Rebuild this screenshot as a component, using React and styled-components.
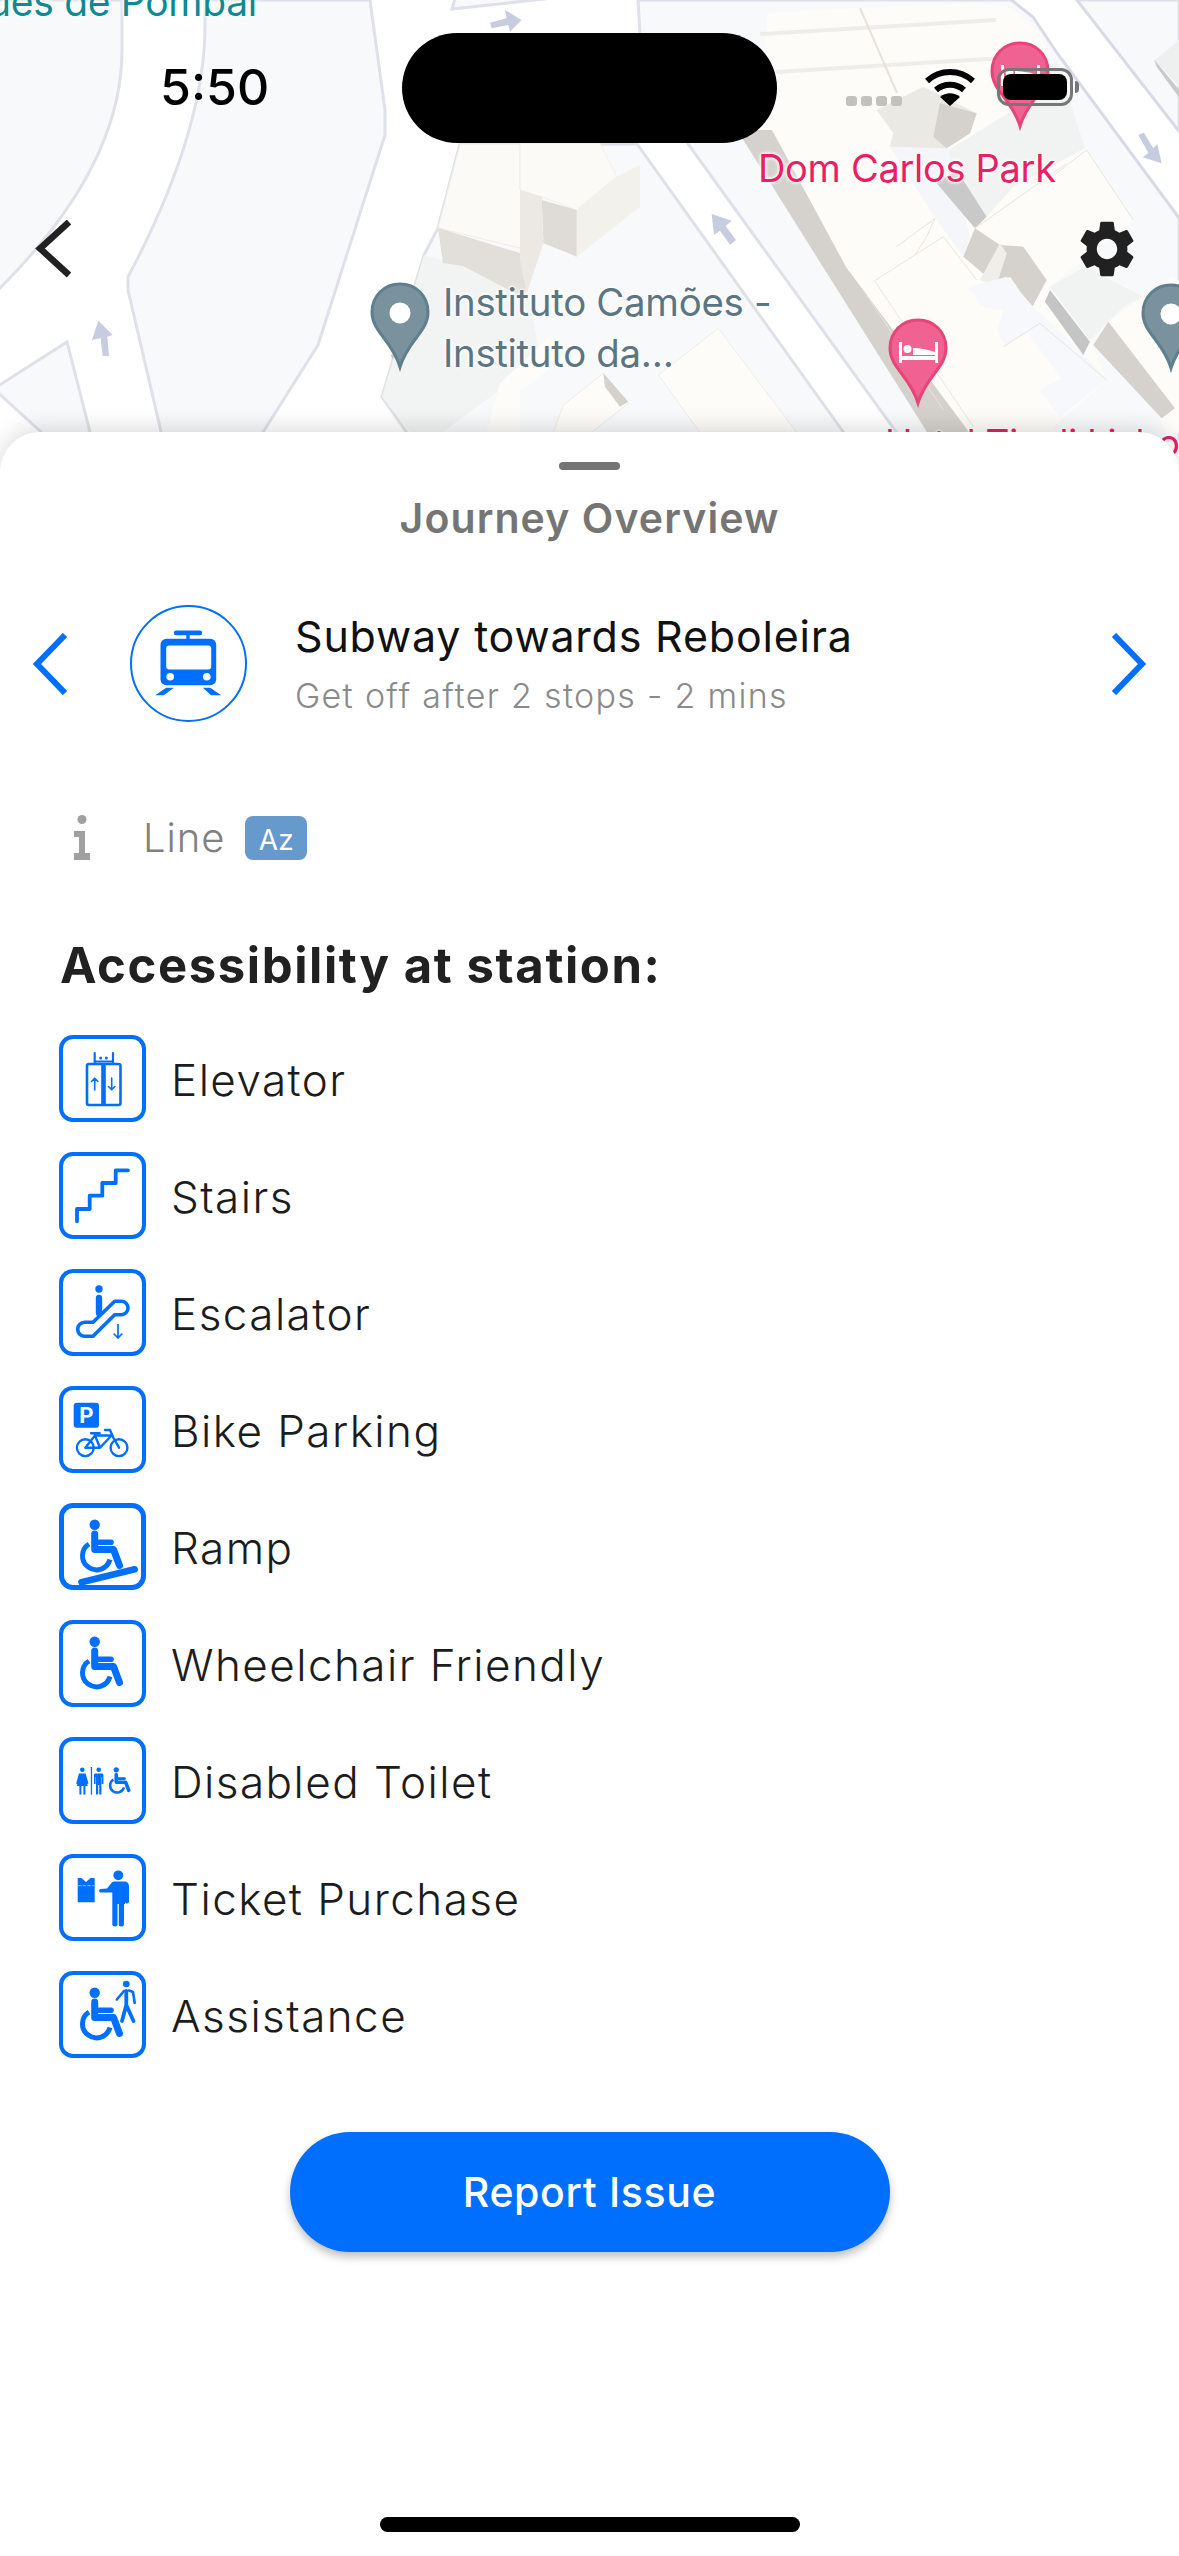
import React from 'react'
import styled, { createGlobalStyle } from 'styled-components'
import { MdSettings } from 'react-icons/md'

const BLUE = '#006ffd'

const GlobalStyle = createGlobalStyle`
  html, body {
    margin: 0;
    padding: 0;
    background: #fff;
  }
  * {
    box-sizing: border-box;
  }
`

const Page = styled.div`
  position: relative;
  width: 1179px;
  height: 2556px;
  overflow: hidden;
  display: flex;
  flex-direction: column;
  background: #fff;
  font-family: Inter, 'Liberation Sans', sans-serif;
`

const MapArea = styled.div`
  position: relative;
  flex-shrink: 0;
  height: 480px;
  overflow: hidden;
  background: #fff;
  svg {
    display: block;
  }
`

const MapLabel = styled.div`
  position: absolute;
  left: ${(p) => p.$x}px;
  top: ${(p) => p.$y}px;
  font-size: ${(p) => p.$size || 38.4}px;
  line-height: 51px;
  letter-spacing: -0.3px;
  white-space: pre;
  color: ${(p) => p.$color};
  text-shadow: 0 0 3px #fff, 0 0 3px #fff, 0 0 5px #fff;
`

const StatusBar = styled.div`
  position: absolute;
  top: 33px;
  left: 0;
  width: 100%;
  display: flex;
  align-items: flex-start;
  padding-left: 160px;
`

const Time = styled.div`
  width: 242px;
  margin-top: 24px;
  font-size: 50px;
  line-height: 60px;
  font-weight: 500;
  color: #000;
`

const Island = styled.div`
  width: 375px;
  height: 110px;
  border-radius: 55px;
  background: #000;
`

const SignalDots = styled.div`
  display: flex;
  gap: 4px;
  margin: 63px 0 0 69px;
`

const SignalDot = styled.span`
  width: 11px;
  height: 10px;
  border-radius: 3px;
  background: #c2c1bd;
`

const WifiIcon = styled.svg`
  margin: 35px 0 0 23px;
`

const Battery = styled.div`
  position: relative;
  width: 76px;
  height: 38px;
  margin: 35px 0 0 22px;
  padding: 3px;
  border: 3px solid #777;
  border-radius: 12px;
  &::after {
    content: '';
    position: absolute;
    right: -9px;
    top: 10px;
    width: 4px;
    height: 12px;
    border-radius: 0 4px 4px 0;
    background: #777;
  }
`

const BatteryFill = styled.div`
  width: 100%;
  height: 100%;
  border-radius: 8px;
  background: #000;
`

const TopControls = styled.div`
  position: absolute;
  top: 220px;
  left: 34px;
  right: 44px;
  display: flex;
  justify-content: space-between;
  align-items: center;
  color: #212121;
`

const Sheet = styled.div`
  position: relative;
  flex: 1;
  margin-top: -48px;
  display: flex;
  flex-direction: column;
  background: #fff;
  border-radius: 40px 40px 0 0;
  box-shadow: 0 -4px 22px rgba(0, 0, 0, 0.14);
`

const Grabber = styled.div`
  align-self: center;
  width: 61px;
  height: 8px;
  margin-top: 30px;
  border-radius: 4px;
  background: #757575;
`

const Title = styled.h2`
  margin: 24px 0 0;
  text-align: center;
  font-size: 41px;
  line-height: 48px;
  font-weight: 600;
  letter-spacing: 1.1px;
  color: #757575;
`

const StepRow = styled.div`
  display: flex;
  align-items: center;
  margin-top: 63px;
  padding: 0 32px;
`

const StepArrow = styled.svg`
  flex-shrink: 0;
`

const StepCircle = styled.div`
  flex-shrink: 0;
  width: 117px;
  height: 117px;
  margin: 0 48px 0 62px;
  border: 2.5px solid ${BLUE};
  border-radius: 50%;
`

const StepText = styled.div`
  flex: 1;
  display: flex;
  flex-direction: column;
  gap: 11px;
`

const StepTitle = styled.div`
  font-size: 43px;
  line-height: 54px;
  letter-spacing: 0.8px;
  color: #111;
`

const StepMeta = styled.div`
  font-size: 34px;
  line-height: 44px;
  letter-spacing: 1.3px;
  font-weight: 300;
  color: #8a8a8a;
`

const LineInfo = styled.div`
  display: flex;
  align-items: center;
  margin-top: 92px;
  padding-left: 73px;
`

const LineText = styled.span`
  margin-left: 52px;
  font-size: 40px;
  line-height: 48px;
  font-weight: 300;
  letter-spacing: 0.9px;
  color: #808080;
`

const LineBadge = styled.span`
  display: flex;
  align-items: center;
  justify-content: center;
  width: 62px;
  height: 44px;
  margin-left: 20px;
  border-radius: 8px;
  background: #6699cc;
  font-size: 28px;
  padding-top: 4px;
  color: #fff;
`

const SectionHeading = styled.h3`
  margin: 74px 0 0 60px;
  font-size: 49px;
  line-height: 60px;
  font-weight: 700;
  letter-spacing: 1.6px;
  color: #212121;
`

const FeatureList = styled.div`
  display: flex;
  flex-direction: column;
  gap: 30px;
  margin-top: 39px;
  padding-left: 59px;
`

const FeatureRow = styled.div`
  display: flex;
  align-items: center;
  gap: 25px;
`

const FeatureIcon = styled.div`
  flex-shrink: 0;
  width: 87px;
  height: 87px;
  border-radius: 14px;
  box-shadow: inset 0 0 0 ${(p) => p.$border || 4}px ${BLUE};
  svg {
    display: block;
  }
`

const FeatureName = styled.span`
  padding-top: 2px;
  font-size: 44px;
  line-height: 56px;
  font-weight: 300;
  letter-spacing: 1.45px;
  color: #1c1c1c;
`

const ReportButton = styled.button`
  align-self: center;
  width: 600px;
  height: 120px;
  margin-top: 74px;
  border: none;
  border-radius: 60px;
  background: ${BLUE};
  box-shadow: 0 5px 9px rgba(0, 0, 0, 0.25);
  font-family: inherit;
  font-size: 41px;
  font-weight: 500;
  letter-spacing: 0.65px;
  color: #fff;
`

const HomeBar = styled.div`
  align-self: center;
  width: 420px;
  height: 15px;
  margin-top: auto;
  margin-bottom: 24px;
  border-radius: 8px;
  background: #000;
`

const PIN = 'M30 2C14 2 2 14 2 30C2 50 22 58 30 85C38 58 58 50 58 30C58 14 46 2 30 2Z'

const SlatePin = ({ x, y }) => (
  <g transform={`translate(${x} ${y})`}>
    <path d={PIN} fill="#7a929e" stroke="#5f7f8f" strokeWidth="3" />
    <circle cx="30" cy="31" r="10.5" fill="#fff" />
  </g>
)

const BedPin = ({ x, y }) => (
  <g transform={`translate(${x} ${y})`}>
    <path d={PIN} fill="#f06292" stroke="#e8447a" strokeWidth="3" />
    <g fill="#fff">
      <rect x="11" y="24" width="3" height="21" />
      <rect x="47" y="24" width="3" height="21" />
      <rect x="11" y="38" width="39" height="4" />
      <circle cx="19.5" cy="31" r="4" />
      <path d="M25 37V30C33 30 40 32 47 34V37Z" />
    </g>
  </g>
)

const MapDrawing = () => (
  <svg width="1179" height="480" viewBox="0 0 1179 480">
    <rect width="1179" height="480" fill="#fff" />
    <g fill="#f8f9fb" stroke="#dfe1e8" strokeWidth="3">
      <path d="M-5 0H122V50C122 120 90 200 -5 293Z" />
      <path d="M205 0V25C205 80 190 160 128 277V290L163 440H258L318 345L385 135V110L370 0Z" />
      <path d="M-5 388L67 342L92 440H50L-5 390Z" />
      <path d="M460 144L438 228L424 255L382 397L412 440H849L637 144Z" />
      <path d="M638 0L640 33L688 144L902 440H1179V0Z" />
      <path d="M456 -5L452 9L580 -5Z" />
    </g>
    <path d="M1005 -5H1073L1185 139V226L1057 53L1033 17Z" fill="#fff" stroke="#d8dbe5" strokeWidth="3" />
    <path d="M395 353L435 440" stroke="#cdcdcd" strokeWidth="10" fill="none" />
    <path d="M424 255L382 397L410 432H443L540 360L530 300L463 266Z" fill="#f2f4f3" />

    {/* left building */}
    <path d="M460 144H520V190L542 197L528 250L438 228Z" fill="#fbfaf6" stroke="#eeece6" />
    <path d="M438 228L520 253L528 300L463 266L443 263Z" fill="#e2dfdb" />
    <g transform="translate(520 0) scale(0.3333)">
      <path d="M0 430H240L290 530L170 630L65 590L0 570Z" fill="#fbfaf6" stroke="#eeece6" strokeWidth="2" />
      <path d="M290 530L360 495V620L170 770V630Z" fill="#f3f1ec" />
      <path d="M65 600L170 630V770L70 730Z" fill="#dfdcd8" />
      <path d="M65 590L70 730L20 880L0 780V570Z" fill="#ece9e5" />
      {/* lower buildings */}
      <path d="M415 1125L595 985L830 1297H540Z" fill="#fdfcf8" stroke="#e9e6de" strokeWidth="2" />
      <path d="M100 1297L130 1215L250 1120L325 1210L215 1297Z" fill="#fdfcf8" stroke="#e9e6de" strokeWidth="2" />
      <path d="M250 1120L325 1205L300 1220L255 1160Z" fill="#d5d2cd" />
      <path d="M-100 1297L-60 1150L100 1000L100 1100L0 1170V1297Z" fill="#fdfcf8" />
    </g>

    {/* big block on the right */}
    <path d="M768 13L860 8L980 3L1010 8L1040 33L1085 148L1133 220L1050 287L1090 340L1107 380L1053 427L1060 440H969L843 267L754 144Z" fill="#fdfcf8" />
    <path d="M737 130L772 130L846 267L975 440H932L823 267Z" fill="#d5d2cd" />
    <g fill="none" stroke="#efede7" strokeWidth="4">
      <path d="M760 34L996 20" />
      <path d="M776 72L1003 58" />
    </g>
    <path d="M860 8L897 93" stroke="#e6e3da" strokeWidth="2" fill="none" />

    <g transform="translate(800 20) scale(0.3333)">
      <path d="M430 400L640 270L770 120L855 385L640 500L560 590Z" fill="#f0f3f2" />
      <path d="M270 380L440 370L510 650L490 710L410 600Z" fill="#f4f6fa" />
      <path d="M230 270L370 200L530 280L510 340L440 385L270 380L280 340Z" fill="#ebe9e4" />
      <path d="M420 250L530 280L510 340L440 385L400 350Z" fill="#d5d2cd" />
      <path d="M410 490L470 450L560 590L525 625Z" fill="#c9c9c9" />
      <path d="M525 625L600 675L670 680L740 780L695 865L630 770L590 795L490 710Z" fill="#d5d2cd" />
      <path d="M540 780L600 670L620 700L590 795Z" fill="#f0eee9" />
      <path d="M505 800L620 770L700 860L850 1000L920 1080L780 1190L720 1110L785 1075L680 935L620 980L590 930L610 870L545 860Z" fill="#f6f8fb" />
      <path d="M735 845L750 810L870 965L850 1005Z" fill="#c5c5c5" />
      <path d="M750 800L855 740L1030 830L970 860L925 905L870 960Z" fill="#f0f3f2" />
      <path d="M925 905L1115 770L1150 790V1240H1100Z" fill="#fdfcf8" />
      <path d="M880 975L925 905L1125 1165L1085 1195Z" fill="#d5d2cd" />
      <path d="M1065 120L1150 50V160L1150 215Z" fill="#eef0ef" />
      <path d="M1062 118L1150 225V250L1070 140Z" fill="#c9c9c9" />
      <g fill="none" stroke="#e8e5dc" strokeWidth="3">
        <path d="M525 625L800 430" />
        <path d="M290 680L405 595L380 650L345 705" />
        <path d="M220 785L430 650L530 780" />
        <path d="M190 810L430 1170" />
        <path d="M225 785L520 1220" />
        <path d="M610 980L720 910L920 1080" />
        <path d="M730 490L860 390L1000 600" />
      </g>
    </g>

    {/* one-way arrows */}
    <g fill="#c8cce0">
      <path transform="scale(0.3333)" d="M295 962L338 1005L322 1010L327 1068L308 1068L302 1015L276 1020Z" />
      <path transform="scale(0.3333)" d="M1470 68L1520 55L1515 30L1565 60L1530 95L1525 75L1475 85Z" />
      <path transform="translate(520 0) scale(0.3333)" d="M575 642L635 662L617 678L648 720L630 735L600 692L582 705Z" />
      <path transform="translate(800 20) scale(0.3333)" d="M1015 345L1032 338L1060 385L1072 372L1085 430L1028 412L1045 398Z" />
    </g>

    <SlatePin x={370} y={282} />
    <SlatePin x={1141} y={283} />
    <BedPin x={888} y={318} />
    <BedPin x={990} y={41} />
  </svg>
)

const Wheelchair = () => (
  <g>
    <circle cx="35.7" cy="21.8" r="5.2" fill={BLUE} stroke="none" />
    <g fill="none" stroke={BLUE} strokeLinecap="round" strokeLinejoin="round">
      <path d="M35.7 31V46.5H54.5L60.5 62.5" strokeWidth="7" />
      <path d="M35.7 39.3H52" strokeWidth="5.6" />
      <path d="M30 41A14 14 0 1 0 51 56.5" strokeWidth="5" strokeLinecap="butt" />
    </g>
  </g>
)

const IconSvg = ({ children }) => (
  <svg width="87" height="87" viewBox="0 0 87 87">
    {children}
  </svg>
)

const ElevatorIcon = () => (
  <IconSvg>
    <g fill="none" stroke={BLUE} strokeWidth="2.6" strokeLinecap="round" strokeLinejoin="round">
      <rect x="28" y="29" width="33.5" height="41" rx="2" />
      <path d="M35.7 18V28M54 18V28M35.7 26.5H54" strokeWidth="2.2" />
      <path d="M35.7 55V43.5M32.5 46.5L35.7 43.2L38.9 46.5" strokeWidth="1.6" />
      <path d="M52.7 43V54.5M49.5 51.5L52.7 54.8L55.9 51.5" strokeWidth="1.6" />
    </g>
    <rect x="42.2" y="29" width="4.6" height="41" fill={BLUE} />
    <circle cx="41.7" cy="23" r="1.5" fill={BLUE} />
    <circle cx="47.3" cy="23" r="1.5" fill={BLUE} />
  </IconSvg>
)

const StairsIcon = () => (
  <IconSvg>
    <path
      d="M18 69.3V57H30.7V43.7H43.3V31H56.7V18.3H69"
      fill="none"
      stroke={BLUE}
      strokeWidth="3.8"
      strokeLinecap="round"
      strokeLinejoin="round"
    />
  </IconSvg>
)

const EscalatorIcon = () => (
  <IconSvg>
    <circle cx="40" cy="20" r="3.7" fill={BLUE} />
    <path d="M40 29V44" stroke={BLUE} strokeWidth="6.4" strokeLinecap="round" />
    <path
      d="M25.7 53.3H34L55.7 32.3H62.3A6.7 6.7 0 0 1 62.3 45.7H55.7L34 67.3H25.7A7 7 0 0 1 25.7 53.3Z"
      fill="#fff"
      stroke={BLUE}
      strokeWidth="3.6"
      strokeLinejoin="round"
    />
    <path d="M59 55V68.5M54.7 64.5L59 69L63.3 64.5" fill="none" stroke={BLUE} strokeWidth="1.7" />
  </IconSvg>
)

const BikeIcon = () => (
  <IconSvg>
    <rect x="14.7" y="16.7" width="25.3" height="25" rx="3" fill={BLUE} />
    <text x="27.3" y="36.5" textAnchor="middle" fontFamily="Roboto, sans-serif" fontWeight="700" fontSize="22" fill="#fff">
      P
    </text>
    <g fill="none" stroke={BLUE} strokeWidth="2.4" strokeLinecap="round" strokeLinejoin="round">
      <circle cx="26.3" cy="61.7" r="8.4" />
      <circle cx="60" cy="61.7" r="8.4" />
      <path d="M26.3 61.7L36 49.5H52.5L41 61.7H26.3M36 47.5V49.5L41 61.7" />
      <path d="M32 47.3H40.7M46 44H51L54.5 52L60 61.7" />
    </g>
  </IconSvg>
)

const RampIcon = () => (
  <IconSvg>
    <Wheelchair />
    <path d="M22.5 79.3L75.7 66.3" stroke={BLUE} strokeWidth="6.6" strokeLinecap="round" />
  </IconSvg>
)

const ChairIcon = () => (
  <IconSvg>
    <Wheelchair />
  </IconSvg>
)

const ToiletIcon = () => (
  <IconSvg>
    <circle cx="23.3" cy="32.8" r="2.3" fill={BLUE} />
    <path
      d="M20 36.5H26.6L29.5 46.5L28.2 47L26.5 41.5L28.8 49H26.4V57.5H24.4V49H22.4V57.5H20.4V49H17.8L20 41.5L18.4 47L17.1 46.5Z"
      fill={BLUE}
    />
    <rect x="31.8" y="30" width="1.3" height="27.7" fill={BLUE} />
    <circle cx="39.7" cy="32.8" r="2.3" fill={BLUE} />
    <path
      d="M36 36.5H43.2A1.2 1.2 0 0 1 44.4 37.7V47H42.8V40H42.4V57.5H40.2V48H39.2V57.5H37V40H36.6V47H35V37.7A1.2 1.2 0 0 1 36 36.5Z"
      fill={BLUE}
    />
    <g transform="translate(39.3 21.9) scale(0.503)">
      <Wheelchair />
    </g>
  </IconSvg>
)

const TicketIcon = () => (
  <IconSvg>
    <path d="M18.7 48.3V24H22.5L27 28L31.5 24H35.7V48.3Z" fill={BLUE} />
    <path d="M19 31.7H35.5" stroke="#8dbcfd" strokeWidth="1" strokeDasharray="3.5 1.2" />
    <circle cx="59.3" cy="21.3" r="4.9" fill={BLUE} />
    <path d="M55 27.5H65.5A4.5 4.5 0 0 1 70 32V47.5A2 2 0 0 1 66 47.5V50H65V71A2.9 2.9 0 0 1 59.8 71V50H58.5V71A2.9 2.9 0 0 1 53.3 71V38.5L50 38.5H41.5A1.8 1.8 0 0 1 41.5 35L48 34.5L52 29.5A4 4 0 0 1 55 27.5Z" fill={BLUE} />
  </IconSvg>
)

const AssistanceIcon = () => (
  <IconSvg>
    <Wheelchair />
    <circle cx="67.3" cy="13" r="3.3" fill={BLUE} />
    <g fill="none" stroke={BLUE} strokeLinecap="round" strokeLinejoin="round">
      <path d="M67.3 20V34L63 50M67.3 34L74.5 50" strokeWidth="3.8" />
      <path d="M65 20L57.8 28.5M70 19.5L74 21L75.7 32" strokeWidth="2.6" />
    </g>
  </IconSvg>
)

const features = [
  { name: 'Elevator', Icon: ElevatorIcon },
  { name: 'Stairs', Icon: StairsIcon },
  { name: 'Escalator', Icon: EscalatorIcon },
  { name: 'Bike Parking', Icon: BikeIcon },
  { name: 'Ramp', Icon: RampIcon, border: 5 },
  { name: 'Wheelchair Friendly', Icon: ChairIcon },
  { name: 'Disabled Toilet', Icon: ToiletIcon },
  { name: 'Ticket Purchase', Icon: TicketIcon },
  { name: 'Assistance', Icon: AssistanceIcon },
]

const App = () => (
  <Page>
    <GlobalStyle />
    <MapArea>
      <MapDrawing />
      <MapLabel $x={-12} $y={-24} $size={39} $color="#0e8a93">
        ues de Pombal
      </MapLabel>
      <MapLabel $x={758} $y={143} $size={38} $color="#e91e63">
        Dom Carlos Park
      </MapLabel>
      <MapLabel $x={443} $y={277} $color="#5b7583">
        {'Instituto Camões -\nInstituto da…'}
      </MapLabel>
      <MapLabel $x={885} $y={417} $size={37} $color="#e91e63">
        Hotel Tivoli Lisboa
      </MapLabel>
      <StatusBar>
        <Time>5:50</Time>
        <Island />
        <SignalDots>
          <SignalDot />
          <SignalDot />
          <SignalDot />
          <SignalDot />
        </SignalDots>
        <WifiIcon width="50" height="38" viewBox="0 0 50 38">
          <g fill="none" stroke="#000" strokeWidth="6">
            <path d="M2 13C15 1 35 1 48 13" />
            <path d="M11 22C19 15 31 15 39 22" />
          </g>
          <path d="M25 38L15 29C21 24 29 24 35 29Z" fill="#000" />
        </WifiIcon>
        <Battery>
          <BatteryFill />
        </Battery>
      </StatusBar>
      <TopControls>
        <svg width="40" height="58" viewBox="0 0 40 58">
          <path d="M35 2L6 28.5L35 55" fill="none" stroke="#212121" strokeWidth="6.5" />
        </svg>
        <MdSettings size={68} style={{ margin: '-5px -6px' }} />
      </TopControls>
    </MapArea>
    <Sheet>
      <Grabber />
      <Title>Journey Overview</Title>
      <StepRow>
        <StepArrow width="36" height="62" viewBox="0 0 36 62">
          <path d="M33 2L5 31L33 60" fill="none" stroke={BLUE} strokeWidth="6" />
        </StepArrow>
        <StepCircle>
          <svg width="112" height="112" viewBox="2.5 2.5 112 112">
            <rect x="44.3" y="26" width="28.4" height="4.8" rx="2.4" fill={BLUE} />
            <rect x="56.8" y="30" width="3.4" height="5" fill={BLUE} />
            <rect x="31" y="34.3" width="55.7" height="46.4" rx="6" fill={BLUE} />
            <rect x="36.7" y="41" width="45" height="24" rx="3" fill="#fff" />
            <circle cx="40.7" cy="72.3" r="3.8" fill="#fff" />
            <circle cx="77.3" cy="72.3" r="3.8" fill="#fff" />
            <path d="M25.7 90.7L36.7 83.3H44.3L34.3 90.7ZM73.3 83.3H80.7L91.7 90.7H81.7Z" fill={BLUE} />
          </svg>
        </StepCircle>
        <StepText>
          <StepTitle>Subway towards Reboleira</StepTitle>
          <StepMeta>Get off after 2 stops - 2 mins</StepMeta>
        </StepText>
        <StepArrow width="36" height="62" viewBox="0 0 36 62">
          <path d="M3 2L31 31L3 60" fill="none" stroke={BLUE} strokeWidth="6" />
        </StepArrow>
      </StepRow>
      <LineInfo>
        <svg width="18" height="46" viewBox="0 0 18 46">
          <circle cx="9" cy="4.5" r="4.5" fill="#a0a0a0" />
          <path d="M1 16H12V38H17V45H1V38H6V22H1Z" fill="#a0a0a0" />
        </svg>
        <LineText>Line</LineText>
        <LineBadge>Az</LineBadge>
      </LineInfo>
      <SectionHeading>Accessibility at station:</SectionHeading>
      <FeatureList>
        {features.map(({ name, Icon, border }) => (
          <FeatureRow key={name}>
            <FeatureIcon $border={border}>
              <Icon />
            </FeatureIcon>
            <FeatureName>{name}</FeatureName>
          </FeatureRow>
        ))}
      </FeatureList>
      <ReportButton>Report Issue</ReportButton>
      <HomeBar />
    </Sheet>
  </Page>
)

export default App
